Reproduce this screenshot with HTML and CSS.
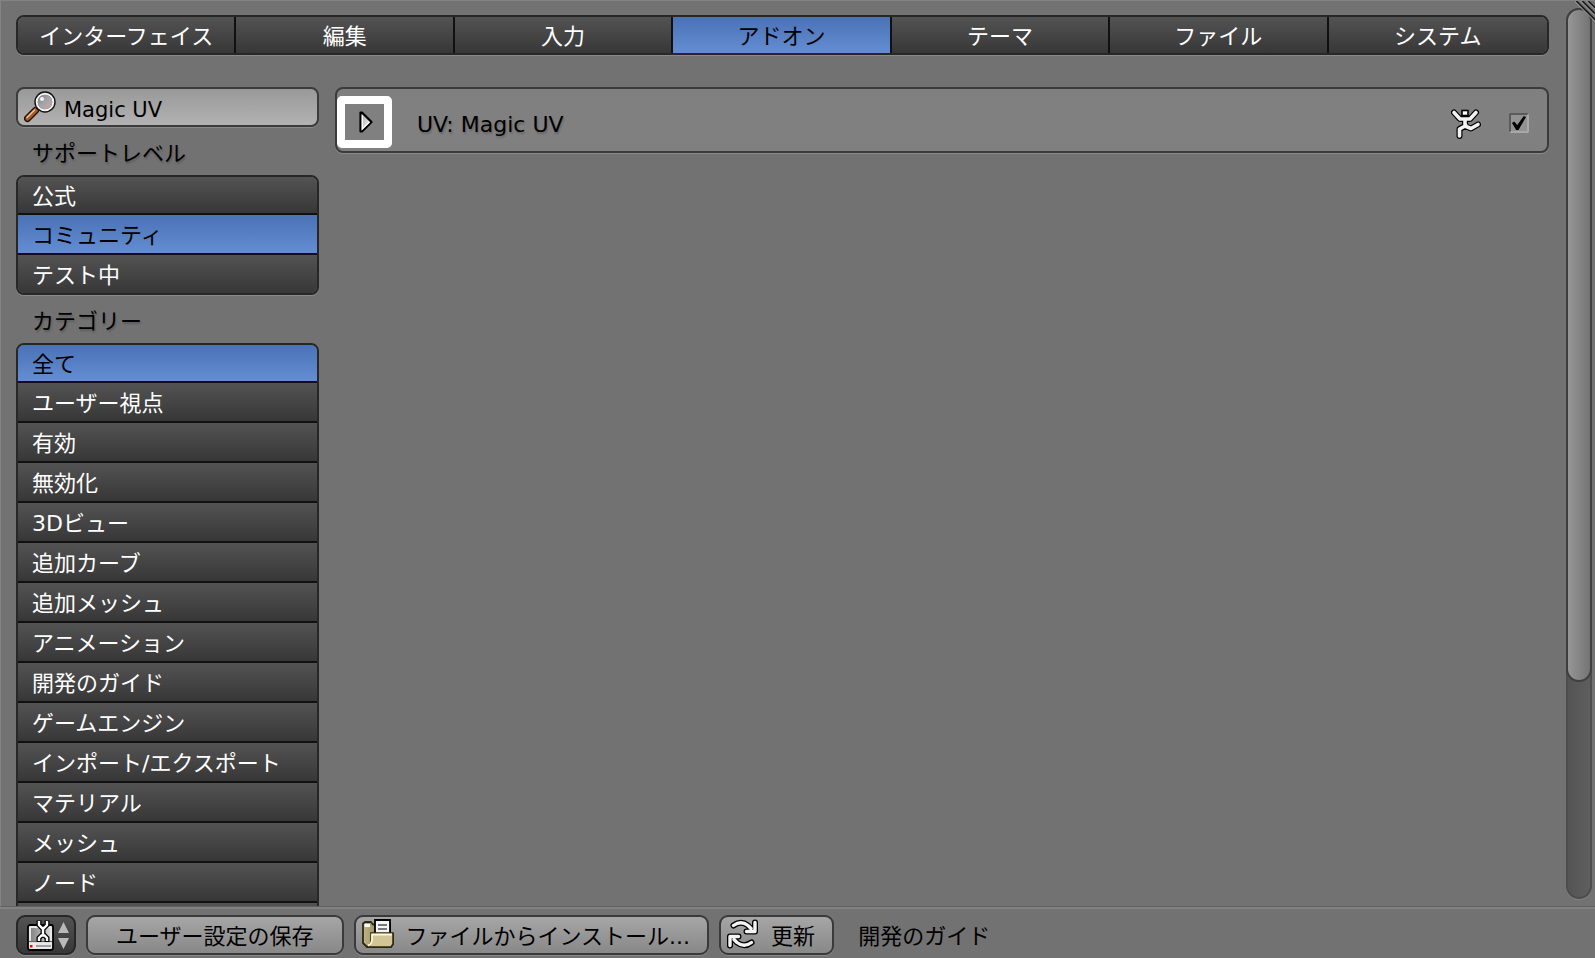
FILE: index.html
```html
<!DOCTYPE html>
<html lang="ja">
<head>
<meta charset="utf-8">
<title>ユーザー設定</title>
<link rel="stylesheet" href="styles.css">
</head>
<body>
<div class="window">
  <div class="workspace">
    <main class="content">
      <nav class="tabs">
        <button type="button" class="tab">インターフェイス</button>
        <button type="button" class="tab">編集</button>
        <button type="button" class="tab">入力</button>
        <button type="button" class="tab selected">アドオン</button>
        <button type="button" class="tab">テーマ</button>
        <button type="button" class="tab">ファイル</button>
        <button type="button" class="tab">システム</button>
      </nav>
      <div class="columns">
        <aside class="sidebar">
          <div class="search">
            <svg class="icon" viewBox="0 0 32 32" aria-hidden="true">
              <defs>
                <linearGradient id="lens" x1="0" y1="0" x2="1" y2="1"><stop offset="0" stop-color="#737c84"/><stop offset=".5" stop-color="#a5a5a8"/><stop offset="1" stop-color="#d6aaa2"/></linearGradient>
              </defs>
              <path d="M11.500 19.500 3.500 27.500" stroke="#1d0e05" stroke-width="7" stroke-linecap="round"/>
              <path d="M12 19 3.500 27.500" stroke="#a95a20" stroke-width="4.500" stroke-linecap="round"/>
              <path d="M10.500 19 3 26.500" stroke="#ecc6a4" stroke-width="1.500" stroke-linecap="round"/>
              <path d="M13 16.500 15.500 19" stroke="#222" stroke-width="3"/>
              <circle cx="21" cy="11" r="9" fill="url(#lens)" stroke="#111" stroke-width="3.400"/>
              <circle cx="21" cy="11" r="8.300" fill="none" stroke="#f4f4f4" stroke-width="2"/>
              <circle cx="18" cy="8" r="2" fill="#fff" opacity=".9"/>
            </svg>
            <input class="search-input" type="text" value="Magic UV" aria-label="検索">
          </div>
          <h2 class="heading">サポートレベル</h2>
          <div class="list">
            <button type="button" class="row">公式</button>
            <button type="button" class="row selected">コミュニティ</button>
            <button type="button" class="row">テスト中</button>
          </div>
          <h2 class="heading">カテゴリー</h2>
          <div class="list">
            <button type="button" class="row selected">全て</button>
            <button type="button" class="row">ユーザー視点</button>
            <button type="button" class="row">有効</button>
            <button type="button" class="row">無効化</button>
            <button type="button" class="row">3Dビュー</button>
            <button type="button" class="row">追加カーブ</button>
            <button type="button" class="row">追加メッシュ</button>
            <button type="button" class="row">アニメーション</button>
            <button type="button" class="row">開発のガイド</button>
            <button type="button" class="row">ゲームエンジン</button>
            <button type="button" class="row">インポート/エクスポート</button>
            <button type="button" class="row">マテリアル</button>
            <button type="button" class="row">メッシュ</button>
            <button type="button" class="row">ノード</button>
            <button type="button" class="row"></button>
          </div>
        </aside>
        <section class="addon">
          <button type="button" class="expand" aria-label="展開">
            <svg class="expand-icon" viewBox="0 0 14 22" aria-hidden="true">
              <defs><linearGradient id="tri" x1="0" y1="0" x2="1" y2="1"><stop offset="0" stop-color="#aaa"/><stop offset="1" stop-color="#fff"/></linearGradient></defs>
              <path d="M1.500 1.500H3L12.500 11 3 20.500H1.500Z" fill="url(#tri)" stroke="#000" stroke-width="2.200" stroke-linejoin="round"/>
              <path d="M3.300 4V18L10.500 11" fill="none" stroke="#fff" stroke-width="1.300"/>
            </svg>
          </button>
          <label class="addon-name" for="enable">UV: Magic UV</label>
          <svg class="person" viewBox="0 0 30 31" aria-hidden="true">
            <g fill="none" stroke="#000" stroke-linecap="round" stroke-linejoin="round" stroke-width="6">
              <path d="M3 3.500 9 10H19L25 3.500M14 10V17M15 16.500 8.500 20V27M14 17 20 19.500 27 15.500"/>
            </g>
            <g fill="none" stroke="#f2f2f2" stroke-linecap="round" stroke-linejoin="round" stroke-width="3.600">
              <path d="M3 3.500 9 10H19L25 3.500M14 10V17M15 16.500 8.500 20V27M14 17 20 19.500 27 15.500"/>
            </g>
            <rect x="11" y="1.500" width="6" height="5" fill="#fff" stroke="#000" stroke-width="1.600"/>
          </svg>
          <input class="check" type="checkbox" id="enable" checked>
        </section>
      </div>
    </main>
    <div class="scroll-gutter">
      <div class="scroll-track"><div class="scroll-thumb"></div></div>
    </div>
    <svg class="corner" viewBox="0 0 20 20" aria-hidden="true">
      <path d="M1 0 20 19M7 0 20 13M13 0 20 7" stroke="#1c1c1c" stroke-width="2"/>
      <path d="M-.5 0 20 20.500M5.500 0 20 14.500M11.500 0 20 8.500" stroke="#b5b5b5" stroke-width="1"/>
    </svg>
  </div>
  <footer class="footer">
    <button type="button" class="editor" aria-label="エディタータイプ" aria-haspopup="menu">
      <svg class="editor-icon" viewBox="0 0 46 32" aria-hidden="true">
        <defs><linearGradient id="drive" x1="0" y1="0" x2="1" y2="0"><stop offset="0" stop-color="#858585"/><stop offset="1" stop-color="#d5d5d5"/></linearGradient></defs>
        <rect x="2" y="6" width="25" height="25" rx="2" fill="#e8e8e8" stroke="#000" stroke-width="1.800"/>
        <path d="M5 9H24V22H5Z" fill="url(#drive)"/>
        <path d="M3 22.500H26" stroke="#666" stroke-width="1.200"/>
        <path d="M10 27H25" stroke="#888" stroke-width="1.500"/>
        <rect x="4" y="26" width="2.500" height="2.500" fill="#e01010"/>
        <path d="M13 1.500V6L16 9H18L21 6V1.500M17 8V17M13 23V19L15.500 16.500H18.500L21 19V23" fill="none" stroke="#000" stroke-width="5"/>
        <path d="M13 2V6L16 9H18L21 6V2M17 8V17M13 22V19L15.500 16.500H18.500L21 19V22" fill="none" stroke="#fff" stroke-width="2.400"/>
        <path d="M32 14 37.500 3 43 14ZM32 19 37.500 30 43 19Z" fill="#b9b9b9"/>
      </svg>
    </button>
    <button type="button" class="action save"><span>ユーザー設定の保存</span></button>
    <button type="button" class="action with-icon">
      <svg class="icon" viewBox="0 0 32 32" aria-hidden="true">
        <defs><linearGradient id="fold" x1="0" y1="0" x2="1" y2="0"><stop offset="0" stop-color="#bfb586"/><stop offset="1" stop-color="#686040"/></linearGradient></defs>
        <path d="M1 4.500 3 3H9L11 5.500H28V15H31V25L29 28H5L1 24Z" fill="url(#fold)" stroke="#2c2814" stroke-width="1.800" stroke-linejoin="round"/>
        <path d="M2.500 5H8V8H2.500Z" fill="#fff"/>
        <path d="M13 1H28V15H13Z" fill="#f4f4f4" stroke="#000" stroke-width="1.800"/>
        <path d="M16 6H25M16 10H25" stroke="#777" stroke-width="1.800"/>
        <path d="M9 14H31V25L29 28H5C8 27 9 24 9 20Z" fill="#d2c694" stroke="#2c2814" stroke-width="1.500"/>
        <path d="M30 15.500H10V21Q9 26 6 26.500" fill="none" stroke="#fff8d8" stroke-width="1.800"/>
      </svg>
      <span>ファイルからインストール...</span>
    </button>
    <button type="button" class="action with-icon">
      <svg class="icon" viewBox="0 0 32 32" aria-hidden="true">
        <g fill="none" stroke-linejoin="round" stroke-linecap="round">
          <g stroke="#000" stroke-width="6">
            <path d="M6.500 6.500Q14 1 21 6.500L24 9.500M28 3.500V12.500H19.500"/>
            <path d="M24.500 23.500Q17 29 10 23.500L7 20.500M3 26.500V17.500H11.500"/>
          </g>
          <g stroke="#f4f4f4" stroke-width="3.400">
            <path d="M6.500 6.500Q14 1 21 6.500L24 9.500M28 3.500V12.500H19.500"/>
            <path d="M24.500 23.500Q17 29 10 23.500L7 20.500M3 26.500V17.500H11.500"/>
          </g>
        </g>
      </svg>
      <span>更新</span>
    </button>
    <span class="status">開発のガイド</span>
  </footer>
</div>
</body>
</html>
```
FILE: styles.css
```css
* { box-sizing: border-box; }

body {
  margin: 0;
  background: #727272;
  color: #000;
  font: 22px/36px "DejaVu Sans", "Noto Sans CJK JP", sans-serif;
}

button, input {
  margin: 0;
  padding: 0;
  border: 0;
  font: inherit;
  color: inherit;
}

.window {
  display: flex;
  flex-direction: column;
  height: 100vh;
  overflow: hidden;
}

.workspace {
  position: relative;
  display: flex;
  flex: 1;
  min-height: 0;
  overflow: hidden;
  border-top: 1px solid #838383;
  border-left: 1px solid #838383;
  border-bottom: 1px solid #606060;
}

.content {
  flex: 1;
  min-width: 0;
  padding: 14px 17px 0 15px;
}

.tabs {
  display: grid;
  grid-template-columns: repeat(7, 1fr);
  border: 2px solid #272727;
  border-radius: 8px;
  box-shadow: 0 1px 0 #8a8a8a;
  overflow: hidden;
}

.tab {
  height: 36px;
  padding-top: 4px;
  border-right: 2px solid #111;
  line-height: 32px;
  white-space: nowrap;
  color: #fff;
  background: linear-gradient(#535353, #373737);
}

.tab:last-child { border-right: 0; }

.tab.selected, .row.selected {
  color: #000;
  background: linear-gradient(#4a72b5, #648dd3);
}

.columns {
  display: flex;
  align-items: flex-start;
  gap: 16px;
  padding-top: 32px;
}

.sidebar { width: 303px; flex: none; }

.search {
  display: flex;
  align-items: center;
  height: 40px;
  padding-left: 6px;
  border: 2px solid #3b3b3b;
  border-radius: 8px;
  background: linear-gradient(#999, #b2b2b2);
  box-shadow: 0 1px 0 #8a8a8a;
}

.icon { width: 32px; height: 32px; flex: none; }

.search-input {
  flex: 1;
  min-width: 0;
  height: 36px;
  padding: 6px 0 0 8px;
  font-size: 21px;
  background: none;
  outline: none;
}

.heading {
  margin: 0;
  height: 48px;
  padding: 9px 0 0 16px;
  font-size: 22px;
  font-weight: 400;
  text-shadow: 1px 2px 2px rgba(0, 0, 0, .2);
}

.list {
  display: flex;
  flex-direction: column;
  border: 2px solid #272727;
  border-radius: 8px;
  box-shadow: 0 1px 0 #8a8a8a;
  overflow: hidden;
}

.row {
  height: 40px;
  padding: 4px 0 0 14px;
  line-height: 32px;
  text-align: left;
  white-space: nowrap;
  color: #fff;
  background: linear-gradient(#535353, #373737);
}

.row + .row { border-top: 2px solid #111; }

.row:first-child { height: 36px; }

.addon {
  display: flex;
  flex: 1;
  align-items: center;
  height: 66px;
  padding-right: 18px;
  border: 2px solid #3b3b3b;
  border-radius: 8px;
  background: #808080;
  box-shadow: 0 1px 0 #8a8a8a;
}

.expand {
  display: flex;
  align-items: center;
  justify-content: center;
  width: 55px;
  height: 52px;
  margin-top: 4px;
  padding-left: 3px;
  border: 8px solid #fff;
  border-radius: 5px;
  background: #808080;
}

.expand-icon { width: 14px; height: 22px; }

.addon-name {
  flex: 1;
  padding: 10px 0 0 25px;
  text-shadow: 1px 2px 2px rgba(0, 0, 0, .2);
}

.person { width: 30px; height: 31px; margin: 8px 28px 0 0; }

.check {
  appearance: none;
  display: grid;
  place-items: center;
  width: 20px;
  height: 20px;
  margin-top: 6px;
  border: 2px solid;
  border-color: #5b5b5b #a8a8a8 #a8a8a8 #5b5b5b;
  border-radius: 2px;
  background: #929292;
}

.check:checked::before {
  content: "";
  width: 14px;
  height: 14px;
  background: #000;
  clip-path: polygon(0 50%, 16% 40%, 38% 64%, 84% 0, 100% 8%, 46% 100%, 30% 100%);
}

.scroll-gutter {
  flex: none;
  width: 29px;
  padding: 7px 3px 7px 0;
}

.scroll-track {
  height: 100%;
  border: 2px solid #4d4d4d;
  border-radius: 13px;
  background: linear-gradient(90deg, #545454, #5e5e5e);
  box-shadow: 0 1px 0 #858585;
}

.scroll-thumb {
  height: 76%;
  margin: -2px;
  border: 2px solid #3f3f3f;
  border-radius: 13px;
  background: linear-gradient(90deg, #969696, #747474);
}

.corner {
  position: absolute;
  top: 0;
  right: 0;
  width: 20px;
  height: 20px;
}

.footer {
  display: flex;
  flex: none;
  gap: 10px;
  padding: 6px 16px 3px;
  border-top: 2px solid #828282;
}

.editor, .action {
  display: flex;
  align-items: center;
  height: 40px;
  border: 2px solid #3a3a3a;
  border-radius: 9px;
  white-space: nowrap;
  box-shadow: 0 1px 0 #8a8a8a;
}

.editor {
  width: 60px;
  padding-left: 8px;
  border-color: #272727;
  background: linear-gradient(#535353, #373737);
}

.editor-icon { width: 46px; height: 32px; }

.action {
  padding: 0 28px;
  background: linear-gradient(#a6a6a6, #888);
}

.action span { padding-top: 4px; }

.with-icon { gap: 12px; padding: 0 17px 0 6px; }

.status { padding: 4px 0 0 14px; }
```
